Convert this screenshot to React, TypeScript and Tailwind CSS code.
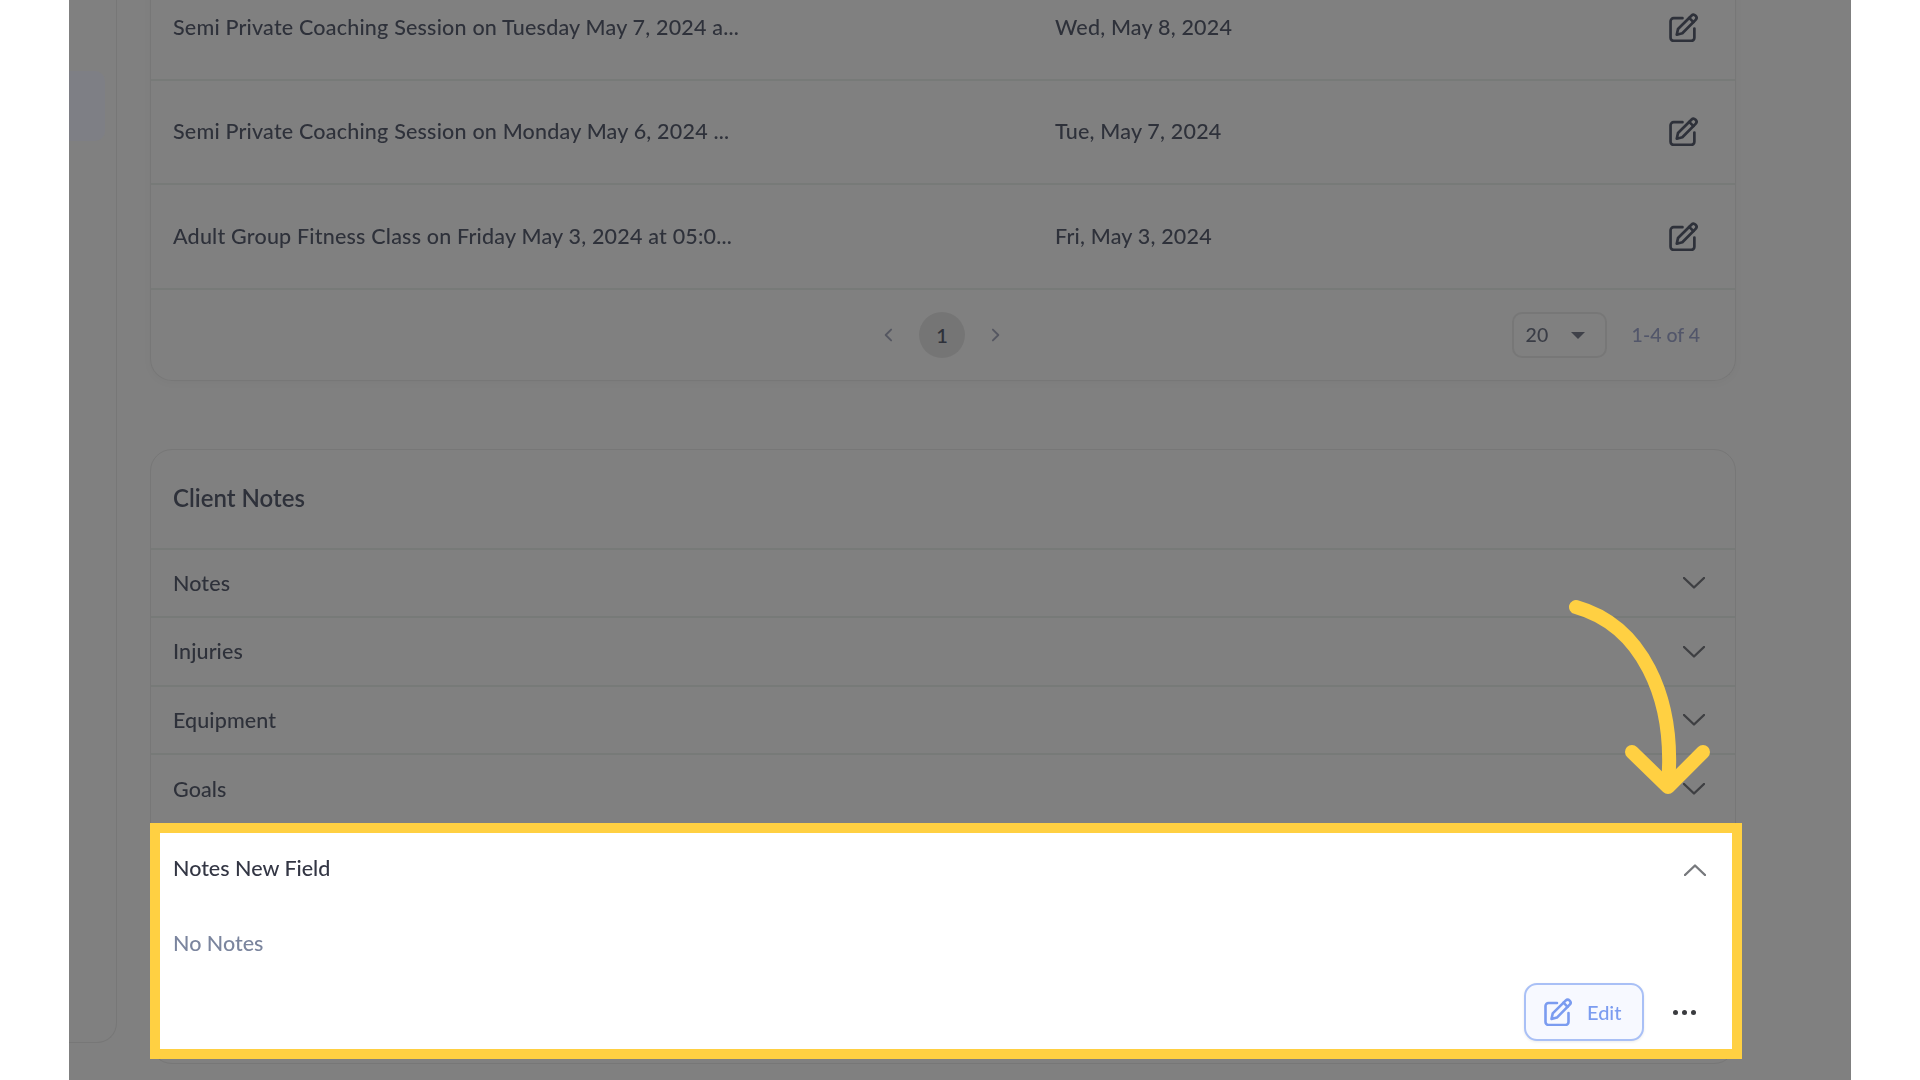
import React from "react";

const font = { fontFamily: "Lato, 'Noto Sans', sans-serif" };

function EditIcon({ className }: { className: string }) {
  return (
    <svg viewBox="0 0 28 28" fill="none" stroke="currentColor" strokeWidth="2.6" strokeLinecap="round" strokeLinejoin="round" className={className}>
      <path d="M13 5H4.5A3 3 0 0 0 1.5 8v16a3 3 0 0 0 3 3h17a3 3 0 0 0 3-3v-9" />
      <path d="M7.5 21l1.2-5.6L21.6 2.6a2.9 2.9 0 0 1 4.1 4.1L12.9 19.6z" />
      <path d="M19.5 4.7l4.1 4.1" />
    </svg>
  );
}

function Chevron({ up, className }: { up?: boolean; className: string }) {
  return (
    <svg viewBox="0 0 22 12" fill="none" stroke="currentColor" strokeWidth="2.4" strokeLinecap="round" strokeLinejoin="round" className={className}>
      <path d={up ? "M1 11L11 1.5 21 11" : "M1 1l10 9.5L21 1"} />
    </svg>
  );
}

const sessions = [
  ["Semi Private Coaching Session on Tuesday May 7, 2024 a...", "Wed, May 8, 2024", "h-[104px]"],
  ["Semi Private Coaching Session on Monday May 6, 2024 ...", "Tue, May 7, 2024", "h-[104px]"],
  ["Adult Group Fitness Class on Friday May 3, 2024 at 05:0...", "Fri, May 3, 2024", "h-[105px]"],
];

const noteRows = ["Notes", "Injuries", "Equipment", "Goals"];

export default function App() {
  return (
    <div className="relative flex h-[1080px] w-[1920px] overflow-hidden bg-white text-[21.5px] font-medium text-[#2e313a]" style={font}>
      <div className="w-[69px] shrink-0 bg-white" />

      <main className="flex h-full w-[1782px] shrink-0 bg-[#808080]">
        <aside className="flex h-[1043px] w-[48px] shrink-0 flex-col rounded-br-[20px] border-r border-b border-[#777777] pt-[71px] blur-[0.5px]">
          <div className="h-[70px] w-[36px] rounded-r-[10px] bg-[#7e7f85]" />
        </aside>

        <section className="ml-[33px] flex w-[1593px] flex-col">
          <div className="-mt-[23px] w-[1586px] rounded-b-[22px] border-x border-b border-[#777777] blur-[0.5px] shadow-[0_2px_8px_rgba(0,0,0,0.03)]">
            {sessions.map(([title, date, height]) => (
              <div key={title} className={`flex items-center border-b-2 border-[#777a78] pb-[1px] pl-[22px] pr-[37px] ${height}`}>
                <span className="w-[882px] tracking-[0.2px]">{title}</span>
                <span className="flex-1 tracking-[0.2px]">{date}</span>
                <EditIcon className="h-[29px] w-[29px]" />
              </div>
            ))}
            <div className="grid h-[90px] grid-cols-[1fr_auto_1fr] items-center pr-[2px]">
              <div />
              <div className="flex items-center gap-[26px]">
                <svg viewBox="0 0 12 18" fill="none" stroke="#555761" strokeWidth="2.4" strokeLinecap="round" strokeLinejoin="round" className="h-[14px] w-[10px]">
                  <path d="M10 2L3 9l7 7" />
                </svg>
                <span className="flex h-[46px] w-[46px] items-center justify-center rounded-full bg-[#757575] text-[20px] font-semibold">1</span>
                <svg viewBox="0 0 12 18" fill="none" stroke="#555761" strokeWidth="2.4" strokeLinecap="round" strokeLinejoin="round" className="h-[14px] w-[10px]">
                  <path d="M2 2l7 7-7 7" />
                </svg>
              </div>
              <div className="flex items-center justify-end gap-[25px] pr-[33px] text-[19.5px]">
                <div className="flex h-[46px] w-[95px] items-center justify-between rounded-[10px] border-2 border-[#777777] pb-[1px] pl-[12px] pr-[20px] text-[#3a3d46]">
                  <span>20</span>
                  <span className="mt-[1px] h-0 w-0 border-x-[7px] border-t-[7px] border-x-transparent border-t-[#3f4149]" />
                </div>
                <span className="text-[#52566a]">1-4 of 4</span>
              </div>
            </div>
          </div>

          <div className="mt-[68px] w-[1586px] rounded-[22px] border border-[#777777] pb-[4px]">
            <div className="flex h-[100px] items-center border-b-2 border-[#777a78] pb-[2px] pl-[22px] text-[24px] font-semibold blur-[0.5px]">
              Client Notes
            </div>
            {noteRows.map((label, i) => (
              <div key={label} className={`flex items-center justify-between pl-[22px] pr-[30px] blur-[0.5px] ${i === 3 ? "h-[68px]" : "h-[68.4px] border-b-2 border-[#777a78]"}`}>
                <span className="tracking-[0.1px]">{label}</span>
                <Chevron className="h-[12px] w-[22px] text-[#3e3f42]" />
              </div>
            ))}
            <div className="-ml-px -mr-[7px] flex h-[236px] flex-col border-[10px] border-[#ffd042] bg-white">
              <div className="flex items-center justify-between pl-[13px] pr-[26px] pt-[25px] blur-[0.5px]">
                <span className="leading-[20px] text-[#333644]">Notes New Field</span>
                <Chevron up className="mt-[4px] h-[12px] w-[22px] text-[#77797d]" />
              </div>
              <div className="mt-[55px] pl-[13px] leading-[20px] text-[#7b859e] blur-[0.5px]">No Notes</div>
              <div className="mt-[30px] flex items-center justify-end gap-[29px] pr-[36px] blur-[0.5px]">
                <button className="flex h-[58px] w-[120px] items-center gap-[15px] rounded-[13px] border-2 border-[#a9c0f6] bg-[#f7f9ff] pl-[18px] text-[20px] text-[#7b9cf0] shadow-[0_1px_3px_rgba(0,0,0,0.08)]">
                  <EditIcon className="h-[28px] w-[28px]" />
                  <span>Edit</span>
                </button>
                <span className="flex items-center gap-[4px]">
                  <i className="h-[5px] w-[5px] rounded-full bg-[#3a3b3f]" />
                  <i className="h-[5px] w-[5px] rounded-full bg-[#3a3b3f]" />
                  <i className="h-[5px] w-[5px] rounded-full bg-[#3a3b3f]" />
                </span>
              </div>
            </div>
          </div>
        </section>
      </main>

      <div className="w-[69px] shrink-0 bg-white" />

      <svg viewBox="1560 590 160 210" fill="none" stroke="#ffd042" strokeWidth="14" strokeLinecap="round" strokeLinejoin="round" className="absolute left-[1560px] top-[590px] h-[210px] w-[160px]">
        <path d="M1576 607C1640 625 1676 695 1668 785" />
        <path d="M1632 752l36 35 35-35" />
      </svg>
    </div>
  );
}
